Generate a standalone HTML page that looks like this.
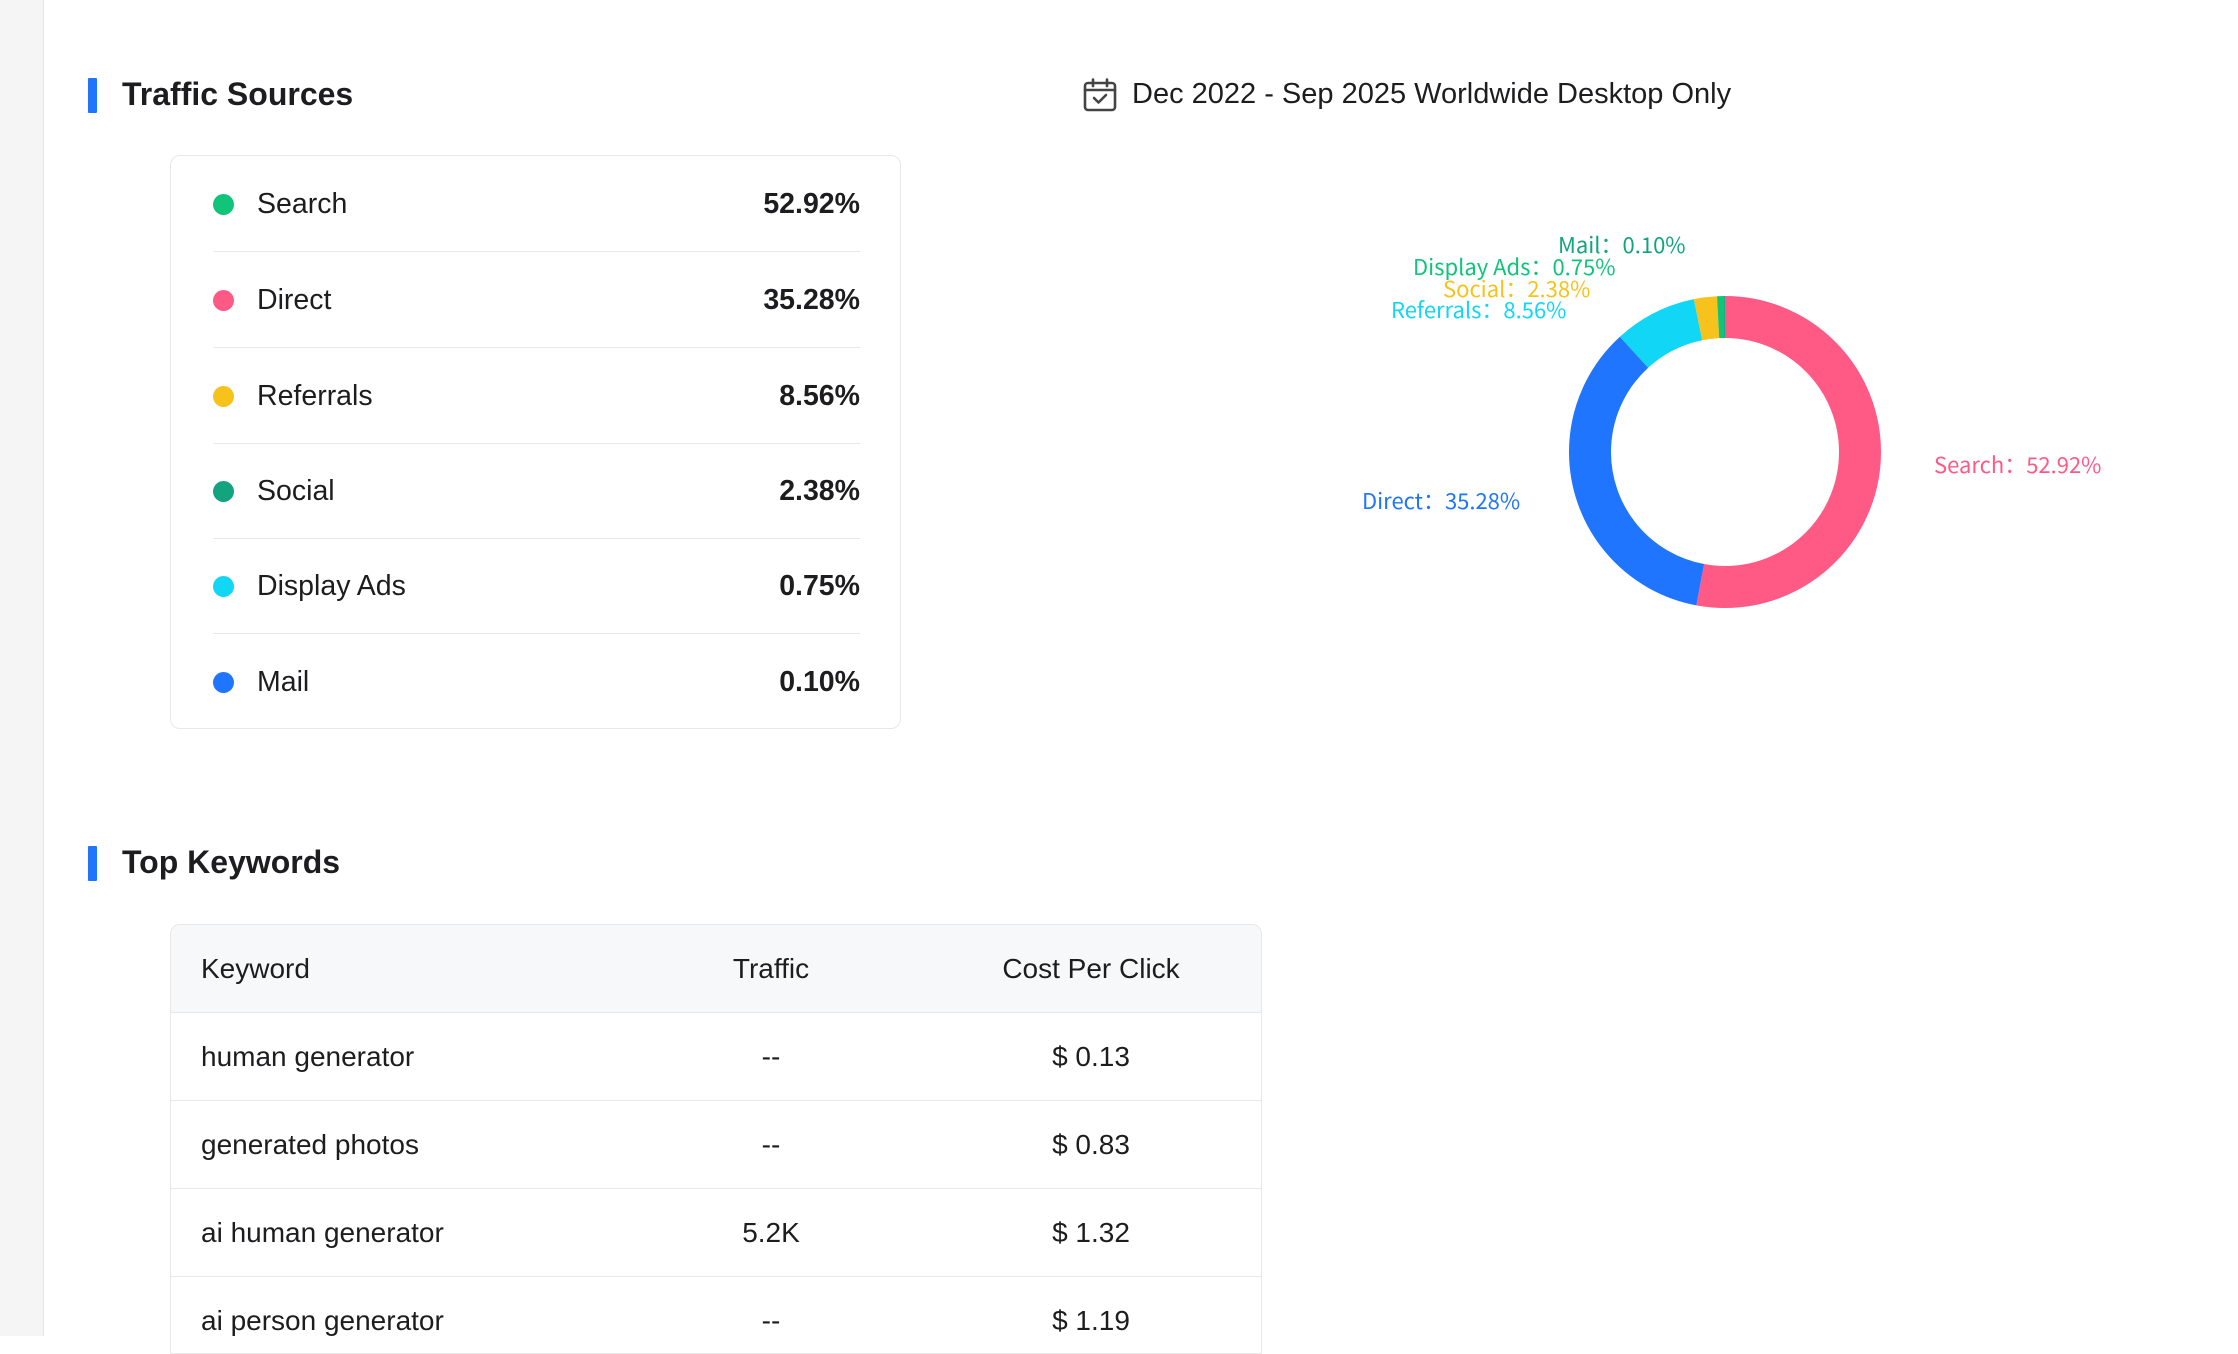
<!DOCTYPE html>
<html><head><meta charset="utf-8"><style>
*{margin:0;padding:0;box-sizing:border-box}
html,body{width:2238px;height:1336px;overflow:hidden;background:#fff;font-family:"Liberation Sans","Noto Sans CJK SC",sans-serif;color:#1d1d1f}
.side{position:absolute;left:0;top:0;width:44px;height:1336px;background:#f5f5f5;border-right:1px solid #e6e6e6}
.bar{position:absolute;left:88px;width:9px;background:#1f75fe;border-radius:1px}
.h{position:absolute;left:122px;font-size:32px;font-weight:bold}
.card{position:absolute;left:170px;top:155px;width:731px;height:574px;border:1.5px solid #e8e8e8;border-radius:10px}
.row{position:absolute;left:42px;width:647px;height:96px;font-size:28.5px}
.row .dot{position:absolute;left:0;top:38px;width:21px;height:21px;border-radius:50%}
.row .l{position:absolute;left:44px;top:32px}
.row .v{position:absolute;right:0;top:32px;font-weight:bold}
.row.b{border-bottom:1.5px solid #e8e8e8}
.date{position:absolute;left:1132px;top:78px;font-size:29px}
.lab{position:absolute;font-size:22px;font-family:"Noto Sans CJK SC","Liberation Sans",sans-serif;white-space:nowrap;line-height:1}
.tbl{position:absolute;left:170px;top:924px;width:1092px;height:430px;border:1.5px solid #e8e8e8;border-radius:10px 10px 0 0;overflow:hidden}
.tr{position:absolute;left:0;width:100%;height:88px;border-bottom:1.5px solid #e8e8e8;font-size:28px}
.tr span{position:absolute;top:28px}
.c1{left:30px}.c2{left:600px;width:0}.c3{left:920px;width:0}
.ctr{display:inline-block;transform:translateX(-50%);white-space:nowrap;font-style:normal}
</style></head><body>
<div class="side"></div>
<div class="bar" style="top:78px;height:35px"></div>
<div class="h" style="top:76px">Traffic Sources</div>

<div class="card">
 <div class="row b" style="top:0"><div class="dot" style="background:#10c47a"></div><span class="l">Search</span><span class="v">52.92%</span></div>
 <div class="row b" style="top:96px"><div class="dot" style="background:#ff5a85"></div><span class="l">Direct</span><span class="v">35.28%</span></div>
 <div class="row b" style="top:192px"><div class="dot" style="background:#f7c21b"></div><span class="l">Referrals</span><span class="v">8.56%</span></div>
 <div class="row b" style="top:287px"><div class="dot" style="background:#13a47f"></div><span class="l">Social</span><span class="v">2.38%</span></div>
 <div class="row b" style="top:382px"><div class="dot" style="background:#12d6f5"></div><span class="l">Display Ads</span><span class="v">0.75%</span></div>
 <div class="row" style="top:478px"><div class="dot" style="background:#1f75fe"></div><span class="l">Mail</span><span class="v">0.10%</span></div>
</div>

<svg style="position:absolute;left:1083px;top:78px" width="34" height="34" viewBox="0 0 34 34" fill="none" stroke="#444" stroke-width="2.6" stroke-linecap="round" stroke-linejoin="round">
<rect x="2" y="5" width="30" height="27" rx="3"/><line x1="2" y1="12" x2="32" y2="12"/><line x1="10" y1="1.5" x2="10" y2="8"/><line x1="24" y1="1.5" x2="24" y2="8"/><polyline points="11,20 15.5,24.5 23,17"/></svg>
<div class="date">Dec 2022 - Sep 2025 Worldwide Desktop Only</div>

<svg style="position:absolute;left:0;top:0" width="2238" height="1336">
<g transform="translate(1725 452) rotate(-90)" fill="none" stroke-width="42">
<circle r="135" stroke="#ff5a85" stroke-dasharray="448.88 1000" stroke-dashoffset="0"/>
<circle r="135" stroke="#1f75fe" stroke-dasharray="299.26 1000" stroke-dashoffset="-448.88"/>
<circle r="135" stroke="#12d6f5" stroke-dasharray="72.61 1000" stroke-dashoffset="-748.14"/>
<circle r="135" stroke="#f7c21b" stroke-dasharray="20.19 1000" stroke-dashoffset="-820.75"/>
<circle r="135" stroke="#10c47a" stroke-dasharray="6.36 1000" stroke-dashoffset="-840.94"/>
<circle r="135" stroke="#13a47f" stroke-dasharray="1.2 1000" stroke-dashoffset="-847.1"/>
</g></svg>
<div class="lab" style="left:1558px;top:233px;color:#13a47f">Mail：0.10%</div>
<div class="lab" style="left:1413px;top:255px;color:#10c47a">Display Ads：0.75%</div>
<div class="lab" style="left:1443px;top:277px;color:#f7c21b">Social：2.38%</div>
<div class="lab" style="left:1391px;top:298px;color:#12d6f5">Referrals：8.56%</div>
<div class="lab" style="left:1362px;top:489px;color:#1f75fe">Direct：35.28%</div>
<div class="lab" style="left:1934px;top:453px;color:#ff5a85">Search：52.92%</div>

<div class="bar" style="top:846px;height:35px"></div>
<div class="h" style="top:844px">Top Keywords</div>

<div class="tbl">
 <div class="tr" style="top:0;background:#f7f8fa"><span class="c1">Keyword</span><span class="c2"><i class="ctr">Traffic</i></span><span class="c3"><i class="ctr">Cost Per Click</i></span></div>
 <div class="tr" style="top:88px"><span class="c1">human generator</span><span class="c2"><i class="ctr">--</i></span><span class="c3"><i class="ctr">$ 0.13</i></span></div>
 <div class="tr" style="top:176px"><span class="c1">generated photos</span><span class="c2"><i class="ctr">--</i></span><span class="c3"><i class="ctr">$ 0.83</i></span></div>
 <div class="tr" style="top:264px"><span class="c1">ai human generator</span><span class="c2"><i class="ctr">5.2K</i></span><span class="c3"><i class="ctr">$ 1.32</i></span></div>
 <div class="tr" style="top:352px;border-bottom:none"><span class="c1">ai person generator</span><span class="c2"><i class="ctr">--</i></span><span class="c3"><i class="ctr">$ 1.19</i></span></div>
</div>
</body></html>
